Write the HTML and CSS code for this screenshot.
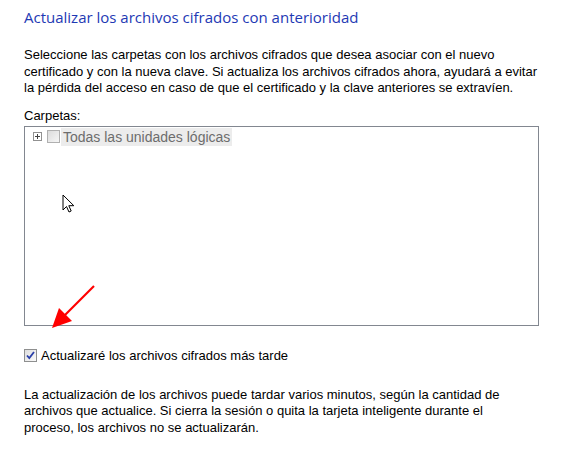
FILE: index.html
```html
<!DOCTYPE html>
<html lang="es">
<head>
<meta charset="utf-8">
<link rel="stylesheet" href="styles.css">
</head>
<body>
<div class="page">
  <h1 class="title">Actualizar los archivos cifrados con anterioridad</h1>
  <p class="text intro">Seleccione las carpetas con los archivos cifrados que desea asociar con el nuevo certificado y con la nueva clave. Si actualiza los archivos cifrados ahora, ayudará a evitar la pérdida del acceso en caso de que el certificado y la clave anteriores se extravíen.</p>
  <div class="label">Carpetas:</div>
  <div class="tree">
    <div class="node">
      <span class="expander"><svg width="9" height="9" viewBox="0 0 9 9"><rect x="0.5" y="0.5" width="8" height="8" fill="#fff" stroke="#919191"/><path d="M2 4.5h5M4.5 2v5" stroke="#444" stroke-width="1"/></svg></span>
      <span class="cb cb-disabled"></span>
      <span class="node-text">Todas las unidades lógicas</span>
    </div>
    <svg class="cursor" width="14" height="20" viewBox="0 0 14 20"><path d="M1 1v15l3.5-3.5 2.5 5.5 2.2-1-2.4-5.3h5z" fill="#fff" stroke="#000" stroke-width="1" stroke-linejoin="miter"/></svg>
  </div>
  <svg class="arrow" width="50" height="48" viewBox="0 0 50 48"><path d="M46 2L14 34" stroke="#f00" stroke-width="2.2"/><path d="M4 44L11 24L24 37Z" fill="#f00"/></svg>
  <label class="check-row">
    <span class="cb cb-checked"><svg width="9" height="9" viewBox="0 0 9 9"><path d="M1 4.5l2.3 2.6L8 1" fill="none" stroke="#2a3fa8" stroke-width="1.8"/></svg></span>
    <span>Actualizaré los archivos cifrados más tarde</span>
  </label>
  <p class="text outro">La actualización de los archivos puede tardar varios minutos, según la cantidad de archivos que actualice. Si cierra la sesión o quita la tarjeta inteligente durante el proceso, los archivos no se actualizarán.</p>
</div>
</body>
</html>
```
FILE: styles.css
```css
html, body {
  margin: 0;
  padding: 0;
  background: #fff;
}
.page {
  position: relative;
  width: 570px;
  height: 455px;
  padding: 7px 20px 0 24px;
  box-sizing: border-box;
  font-family: "Liberation Sans", Arial, sans-serif;
  font-size: 13px;
  color: #000;
}
.title {
  margin: 0;
  font-family: "Open Sans", "Noto Sans", sans-serif;
  font-weight: normal;
  font-size: 15px;
  line-height: 20px;
  color: #1e39b4;
}
.text {
  margin: 0;
  line-height: 16.5px;
}
.intro {
  margin-top: 20px;
  width: 522px;
}
.label {
  margin-top: 11px;
  line-height: 16px;
}
.tree {
  position: relative;
  margin-top: 2px;
  width: 515px;
  height: 200px;
  border: 1px solid #828790;
  box-sizing: border-box;
}
.node {
  display: flex;
  align-items: center;
  height: 18px;
  margin-top: 1px;
  padding-left: 8px;
}
.expander {
  display: flex;
  width: 9px;
  height: 9px;
  margin-right: 5px;
}
.cb {
  display: inline-flex;
  align-items: center;
  justify-content: center;
  width: 13px;
  height: 13px;
  box-sizing: border-box;
  border: 1px solid #8f8f8f;
  background: linear-gradient(135deg, #e0e0e0, #fbfbfb);
}
.cb-disabled {
  border-color: #b0b0b0;
  background: linear-gradient(135deg, #dcdcdc, #f6f6f6);
}
.node-text {
  margin-left: 1px;
  padding: 0 2px 0 2px;
  background: #ececec;
  color: #6d6d6d;
  font-size: 14px;
  line-height: 18px;
}
.cursor {
  position: absolute;
  left: 37px;
  top: 67px;
}
.arrow {
  position: absolute;
  left: 48px;
  top: 284px;
}
.check-row {
  display: flex;
  align-items: center;
  margin-top: 22px;
  height: 16px;
}
.cb-checked {
  margin-right: 4px;
  border-color: #8e8f8f;
  background: linear-gradient(135deg, #dedede, #fafafa);
}
.outro {
  margin-top: 23px;
  width: 505px;
}
```
